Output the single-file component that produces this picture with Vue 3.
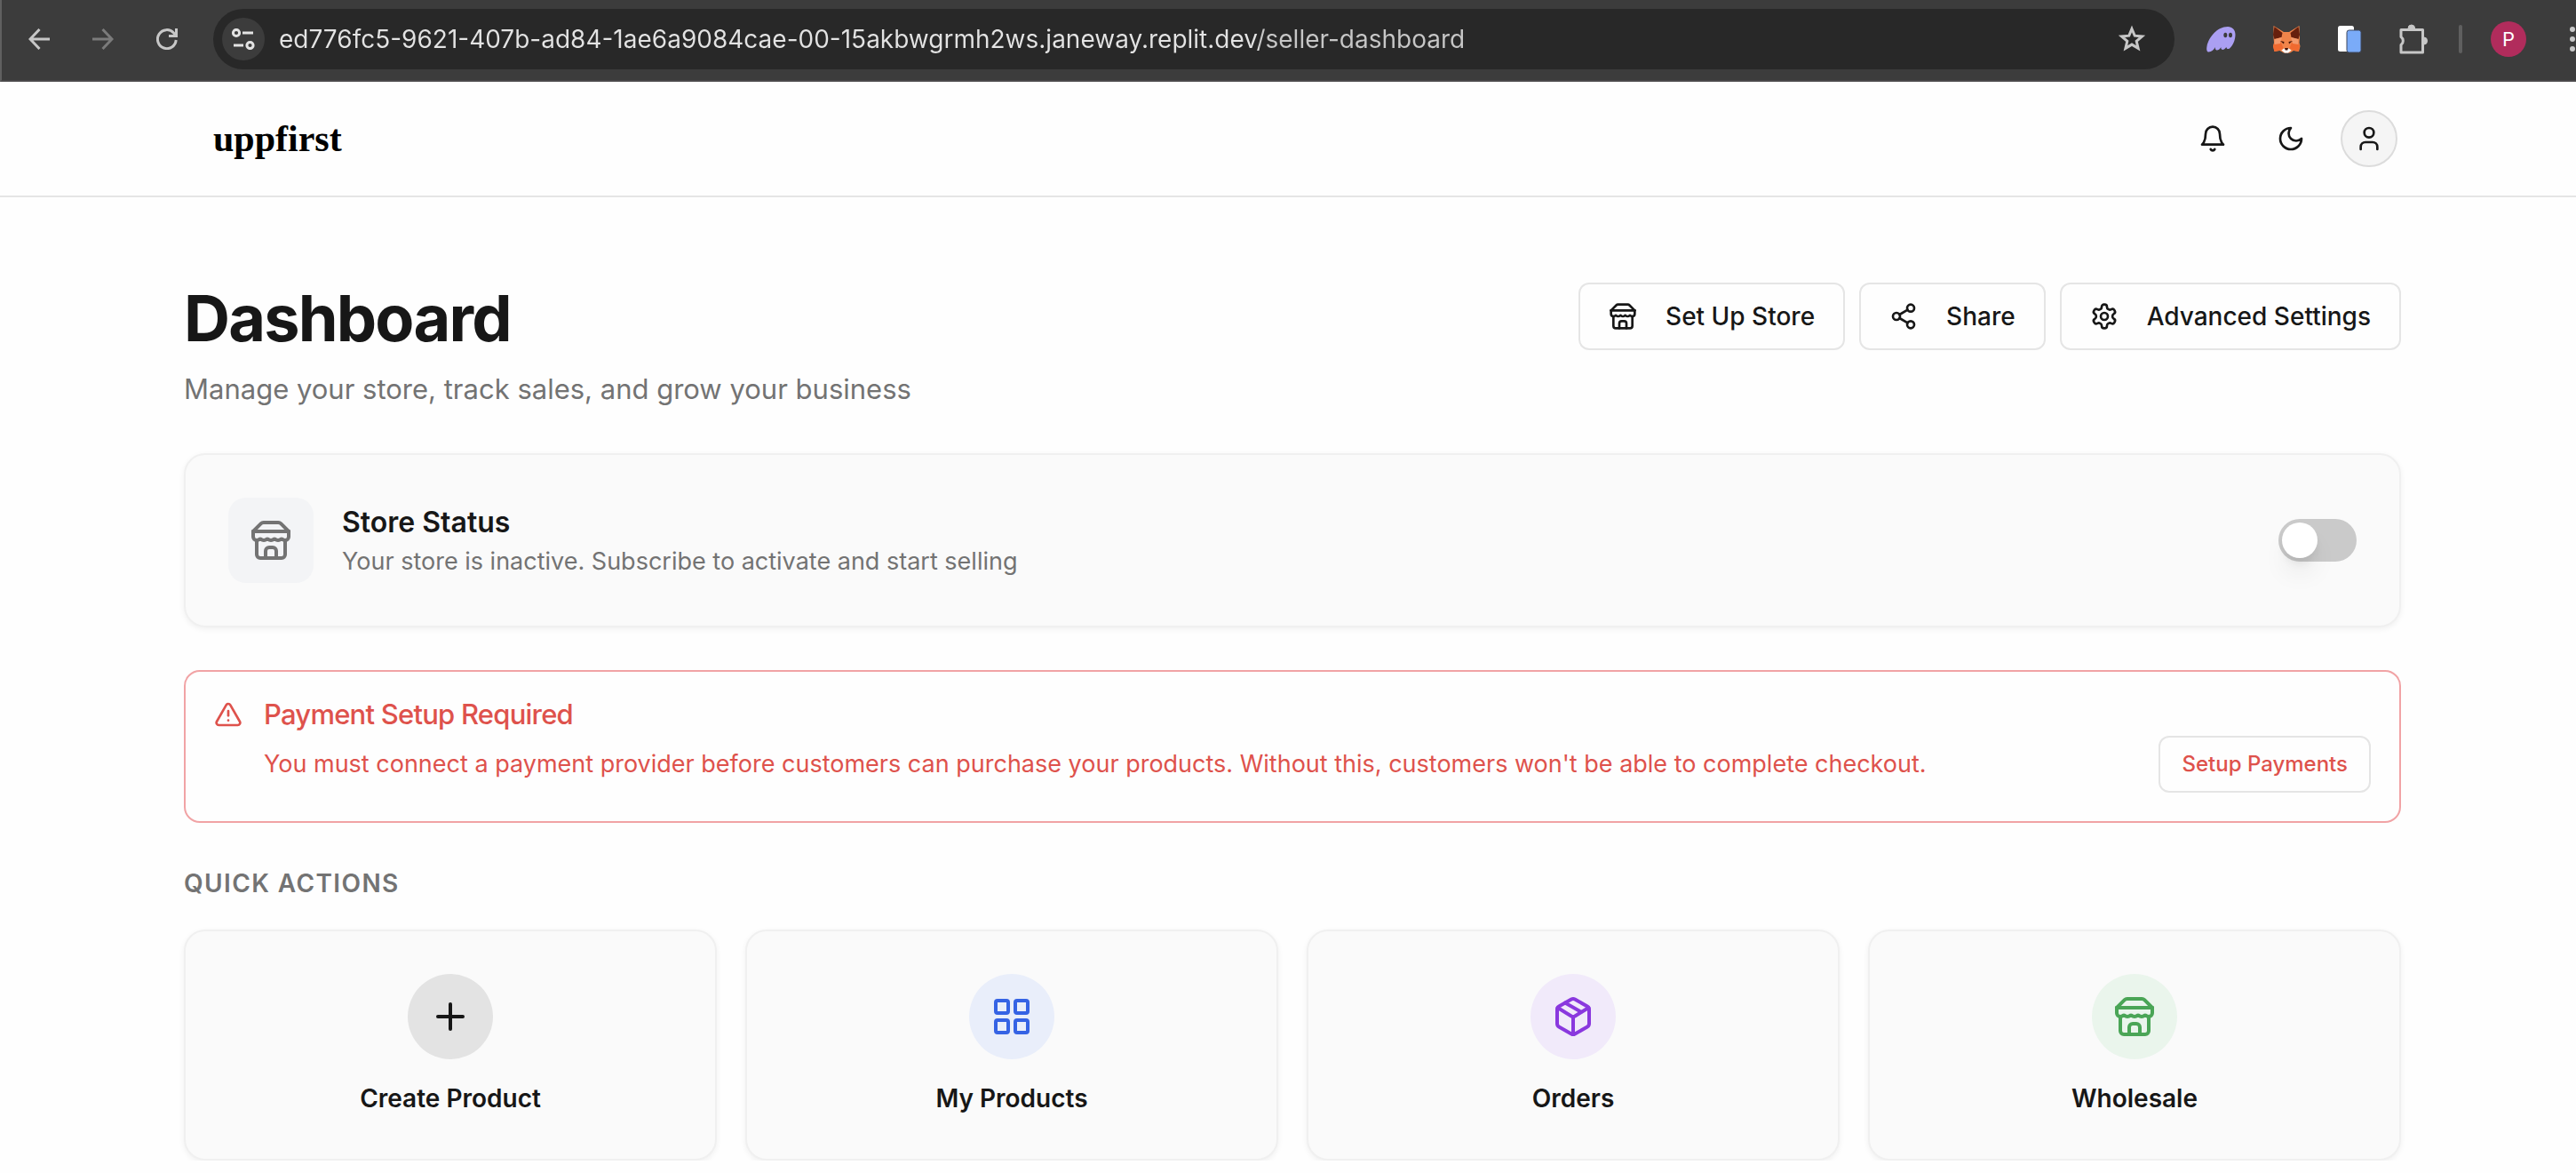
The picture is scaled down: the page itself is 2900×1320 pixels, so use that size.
<script setup>
import { h, ref } from 'vue'

const shapes = {
  bell: ['M6 8a6 6 0 0 1 12 0c0 7 3 9 3 9H3s3-2 3-9', 'M10.3 21a1.94 1.94 0 0 0 3.4 0'],
  moon: ['M12 3a6 6 0 0 0 9 9 9 9 0 1 1-9-9Z'],
  user: ['M19 21v-2a4 4 0 0 0-4-4H9a4 4 0 0 0-4 4v2', 'M8 7a4 4 0 1 0 8 0a4 4 0 1 0-8 0'],
  store: [
    'm2 7 4.41-4.41A2 2 0 0 1 7.83 2h8.34a2 2 0 0 1 1.42.59L22 7',
    'M4 12v8a2 2 0 0 0 2 2h12a2 2 0 0 0 2-2v-8',
    'M15 22v-4a2 2 0 0 0-2-2h-2a2 2 0 0 0-2 2v4',
    'M2 7h20',
    'M22 7v3a2 2 0 0 1-2 2a2.7 2.7 0 0 1-1.59-.63.7.7 0 0 0-.82 0A2.7 2.7 0 0 1 16 12a2.7 2.7 0 0 1-1.59-.63.7.7 0 0 0-.82 0A2.7 2.7 0 0 1 12 12a2.7 2.7 0 0 1-1.59-.63.7.7 0 0 0-.82 0A2.7 2.7 0 0 1 8 12a2.7 2.7 0 0 1-1.59-.63.7.7 0 0 0-.82 0A2.7 2.7 0 0 1 4 12a2 2 0 0 1-2-2V7',
  ],
  share: [
    'M15 5a3 3 0 1 0 6 0a3 3 0 1 0-6 0',
    'M3 12a3 3 0 1 0 6 0a3 3 0 1 0-6 0',
    'M15 19a3 3 0 1 0 6 0a3 3 0 1 0-6 0',
    'M8.59 13.51l6.83 3.98',
    'M15.41 6.51l-6.82 3.98',
  ],
  settings: [
    'M12.22 2h-.44a2 2 0 0 0-2 2v.18a2 2 0 0 1-1 1.73l-.43.25a2 2 0 0 1-2 0l-.15-.08a2 2 0 0 0-2.73.73l-.22.38a2 2 0 0 0 .73 2.73l.15.1a2 2 0 0 1 1 1.72v.51a2 2 0 0 1-1 1.74l-.15.09a2 2 0 0 0-.73 2.73l.22.38a2 2 0 0 0 2.73.73l.15-.08a2 2 0 0 1 2 0l.43.25a2 2 0 0 1 1 1.73V20a2 2 0 0 0 2 2h.44a2 2 0 0 0 2-2v-.18a2 2 0 0 1 1-1.73l.43-.25a2 2 0 0 1 2 0l.15.08a2 2 0 0 0 2.73-.73l.22-.39a2 2 0 0 0-.73-2.73l-.15-.08a2 2 0 0 1-1-1.74v-.5a2 2 0 0 1 1-1.74l.15-.09a2 2 0 0 0 .73-2.73l-.22-.38a2 2 0 0 0-2.73-.73l-.15.08a2 2 0 0 1-2 0l-.43-.25a2 2 0 0 1-1-1.73V4a2 2 0 0 0-2-2z',
    'M9 12a3 3 0 1 0 6 0a3 3 0 1 0-6 0',
  ],
  alert: ['m21.73 18-8-14a2 2 0 0 0-3.48 0l-8 14A2 2 0 0 0 4 21h16a2 2 0 0 0 1.73-3', 'M12 9v4', 'M12 17h.01'],
  plus: ['M5 12h14', 'M12 5v14'],
  grid: [
    'M4 3h5a1 1 0 0 1 1 1v5a1 1 0 0 1-1 1H4a1 1 0 0 1-1-1V4a1 1 0 0 1 1-1z',
    'M15 3h5a1 1 0 0 1 1 1v5a1 1 0 0 1-1 1h-5a1 1 0 0 1-1-1V4a1 1 0 0 1 1-1z',
    'M15 14h5a1 1 0 0 1 1 1v5a1 1 0 0 1-1 1h-5a1 1 0 0 1-1-1v-5a1 1 0 0 1 1-1z',
    'M4 14h5a1 1 0 0 1 1 1v5a1 1 0 0 1-1 1H4a1 1 0 0 1-1-1v-5a1 1 0 0 1 1-1z',
  ],
  box: [
    'M11 21.73a2 2 0 0 0 2 0l7-4A2 2 0 0 0 21 16V8a2 2 0 0 0-1-1.73l-7-4a2 2 0 0 0-2 0l-7 4A2 2 0 0 0 3 8v8a2 2 0 0 0 1 1.73z',
    'M12 22V12',
    'm3.3 7 7.703 4.734a2 2 0 0 0 1.994 0L20.7 7',
    'm7.5 4.27 9 5.15',
  ],
}

const Icon = (props) =>
  h(
    'svg',
    {
      viewBox: '0 0 24 24',
      width: props.size,
      height: props.size,
      fill: 'none',
      stroke: 'currentColor',
      'stroke-width': 2,
      'stroke-linecap': 'round',
      'stroke-linejoin': 'round',
      'aria-hidden': 'true',
    },
    shapes[props.name].map((d) => h('path', { d })),
  )
Icon.props = ['name', 'size']

const address = ref('ed776fc5-9621-407b-ad84-1ae6a9084cae-00-15akbwgrmh2ws.janeway.replit.dev/seller-dashboard')
const active = ref(false)

const headerActions = [
  { label: 'Set Up Store', icon: 'store' },
  { label: 'Share', icon: 'share' },
  { label: 'Advanced Settings', icon: 'settings' },
]

const quickActions = [
  { label: 'Create Product', icon: 'plus', tone: 'neutral' },
  { label: 'My Products', icon: 'grid', tone: 'blue' },
  { label: 'Orders', icon: 'box', tone: 'purple' },
  { label: 'Wholesale', icon: 'store', tone: 'green' },
]
</script>

<template>
  <div class="window">
    <div class="toolbar">
      <div class="nav">
        <button aria-label="Back">
          <svg width="24" height="24" viewBox="0 0 24 24" fill="none" stroke="#c7c7c7" stroke-width="3"><path d="M24 12H2M12.500 1L2 12l10.500 11" /></svg>
        </button>
        <button aria-label="Forward" disabled>
          <svg width="24" height="24" viewBox="0 0 24 24" fill="none" stroke="#7b7b7b" stroke-width="3"><path d="M0 12h22M11.500 1L22 12 11.500 23" /></svg>
        </button>
        <button aria-label="Reload">
          <svg width="24" height="24" viewBox="0 0 24 24" fill="none" stroke="#c7c7c7" stroke-width="3"><path d="M22.200 13A10.400 10.500 0 1 1 19.500 5l2.500 3M22.500 0v8.500H14" /></svg>
        </button>
      </div>
      <div class="omnibox">
        <button class="site-info" aria-label="View site information">
          <svg width="28" height="24" viewBox="0 0 28 24" fill="none" stroke="#e3e3e3" stroke-width="3"><circle cx="6" cy="5" r="3.600" /><path d="M13 5h12M3 19h11" /><circle cx="21.500" cy="19" r="3.600" /></svg>
        </button>
        <input v-model="address" class="address" type="text" aria-label="Address" spellcheck="false" />
        <button class="star" aria-label="Bookmark this tab">
          <svg width="32" height="32" viewBox="0 0 32 32" fill="none" stroke="#c7c7c7" stroke-width="3"><path d="M16 4.500l3.200 7.700 8.300.7-6.300 5.400 1.900 8.100-7.100-4.300-7.100 4.300 1.900-8.100-6.300-5.400 8.300-.7z" /></svg>
        </button>
      </div>
      <div class="extensions">
        <button aria-label="Phantom">
          <svg width="34" height="32" viewBox="0 0 34 32">
            <path d="M25 2c5 0 8.500 3.500 8.500 9 0 6-3 13-6.500 15.500-2 1.300-3.500.3-3.600-1.500-2 2.500-4 3.500-5.300 2.500-.8-.6-.9-1.500-.6-2.500-2 3-4 4-5.500 3.300-1-.5-1.400-1.600-1-3.300-2 3-4.500 5.500-7.500 5.500C1.500 30.500.7 28 1.500 24 3.500 14 13 2 25 2z" fill="#ab9ff2" />
            <ellipse cx="22.300" cy="11.500" rx="2" ry="2.800" fill="#3c3c3c" /><ellipse cx="28" cy="11.500" rx="2" ry="2.800" fill="#3c3c3c" />
          </svg>
        </button>
        <button aria-label="MetaMask">
          <svg width="32" height="32" viewBox="0 0 32 32">
            <path d="M1.500 1L13 8h6L30.500 1l.5 13-.5 6 1 4-1.500 6-6-1-4 2.500h-7L8.500 29l-6 1L1 24l1-4-.5-6z" fill="#f0844a" />
            <path d="M2.500 2l9 7-1 5-8 2-1.500-5zM29.500 2l-9 7 1 5 8 2 1.500-5z" fill="#661f0d" />
            <path d="M2.500 20l7-1 3 7-3 2.500-7 1.500L1 24zM29.500 20l-7-1-3 7 3 2.500 7 1.500L31 24z" fill="#f06a30" />
            <path d="M3 16l8-2-2 7-6.500 1zM29 16l-8-2 2 7 6.500 1z" fill="#f39a6c" />
            <path d="M9 18l4.500 1-.5 2.500zM23 18l-4.500 1 .5 2.500z" fill="#421509" />
            <path d="M10.500 28.500l3-2h5l3 2-3.500 3h-4z" fill="#fff" />
            <path d="M14 26h4l-.7 2.500h-2.600z" fill="#421509" />
          </svg>
        </button>
        <button aria-label="Copy pages">
          <svg width="28" height="32" viewBox="0 0 28 32">
            <rect x="1" y="1" width="18" height="29" rx="2.500" fill="#fff" />
            <rect x="11" y="6" width="16" height="25" rx="2.500" fill="#7aabf8" stroke="#3c465c" stroke-width="1" />
          </svg>
        </button>
        <button aria-label="Extensions">
          <svg width="34" height="36" viewBox="0 0 34 36" fill="none" stroke="#c7c7c7" stroke-width="3" stroke-linejoin="round">
            <path d="M3 7.500h24.500V33H3v-8.500a5.500 5.500 0 0 0 0-9z" />
            <path d="M11 6a3.800 4 0 0 1 7.600 0zM29 16a3.500 4 0 0 1 0 8z" fill="#c7c7c7" stroke-width="1" />
          </svg>
        </button>
      </div>
      <span class="divider"></span>
      <button class="profile" aria-label="Profile">P</button>
      <button class="menu" aria-label="Menu">
        <svg width="6" height="30" viewBox="0 0 6 30" fill="#c7c7c7"><circle cx="3" cy="4" r="3" /><circle cx="3" cy="15" r="3" /><circle cx="3" cy="26" r="3" /></svg>
      </button>
    </div>

    <header class="site-header">
      <a class="logo" href="#">uppfirst</a>
      <div class="site-actions">
        <button aria-label="Notifications"><Icon name="bell" :size="32" /></button>
        <button aria-label="Dark mode"><Icon name="moon" :size="32" /></button>
        <button class="account" aria-label="Account"><Icon name="user" :size="32" /></button>
      </div>
    </header>

    <main>
      <section class="intro">
        <div>
          <h1>Dashboard</h1>
          <p>Manage your store, track sales, and grow your business</p>
        </div>
        <div class="intro-actions">
          <button v-for="a in headerActions" :key="a.label" class="outline">
            <Icon :name="a.icon" :size="32" />{{ a.label }}
          </button>
        </div>
      </section>

      <section class="status card">
        <span class="tile"><Icon name="store" :size="48" /></span>
        <div class="status-text">
          <h2><label for="store-active">Store Status</label></h2>
          <p>Your store is inactive. Subscribe to activate and start selling</p>
        </div>
        <input id="store-active" v-model="active" class="switch" type="checkbox" role="switch" />
      </section>

      <section class="alert" role="alert">
        <Icon name="alert" :size="32" />
        <div class="alert-body">
          <h2>Payment Setup Required</h2>
          <div class="alert-row">
            <p>You must connect a payment provider before customers can purchase your products. Without this, customers won't be able to complete checkout.</p>
            <button class="setup">Setup Payments</button>
          </div>
        </div>
      </section>

      <h2 class="label">QUICK ACTIONS</h2>
      <section class="quick">
        <a v-for="q in quickActions" :key="q.label" class="card action" href="#">
          <span class="circle" :class="q.tone"><Icon :name="q.icon" :size="48" /></span>
          {{ q.label }}
        </a>
      </section>
    </main>
  </div>
</template>

<style>
body {
  background: #fefefe;
  overflow-x: hidden;
}
</style>

<style scoped>
.window {
  font-family: Inter, 'Liberation Sans', sans-serif;
  font-size: 28px;
  line-height: 40px;
  color: #171717;
}
.window * {
  box-sizing: border-box;
}
svg {
  display: block;
  flex: none;
}
h1,
h2,
p {
  margin: 0;
}
button {
  display: flex;
  align-items: center;
  justify-content: center;
  flex: none;
  margin: 0;
  padding: 0;
  border: 0;
  background: none;
  color: inherit;
  font: inherit;
}
a {
  color: inherit;
  text-decoration: none;
}

/* Browser toolbar */
.toolbar {
  display: flex;
  align-items: center;
  height: 92px;
  padding: 0 1px 2px 30px;
  background: #3c3c3c;
  border-left: 2px solid #606060;
  border-bottom: 2px solid #4a484a;
}
.nav {
  display: flex;
  gap: 48px;
  margin-right: 40px;
}
.omnibox {
  display: flex;
  align-items: center;
  flex: 1;
  min-width: 0;
  height: 68px;
  padding: 0 32px 0 10px;
  border-radius: 34px;
  background: #282828;
}
.site-info {
  width: 48px;
  height: 48px;
  border-radius: 50%;
  background: #3c3c3c;
}
.address {
  flex: 1;
  min-width: 0;
  height: 48px;
  margin: 0 16px;
  padding: 0;
  border: 0;
  outline: 0;
  background: linear-gradient(90deg, #e3e3e3 1103px, #c7c7c7 1103px);
  background-clip: text;
  -webkit-background-clip: text;
  -webkit-text-fill-color: transparent;
  font: inherit;
}
.extensions {
  display: flex;
  align-items: center;
  gap: 41px;
  margin-left: 35px;
}
.divider {
  width: 4px;
  height: 32px;
  margin: 0 32px 0 34px;
  border-radius: 2px;
  background: #5f5f5f;
}
.profile {
  width: 40px;
  height: 40px;
  border-radius: 50%;
  background: #b12c5c;
  color: #fff;
  font-size: 22px;
}
.menu {
  margin-left: 49px;
}

/* Site header */
.site-header {
  display: flex;
  align-items: center;
  justify-content: space-between;
  height: 130px;
  padding: 0 201px 0 240px;
  border-bottom: 2px solid #e5e5e5;
}
.logo {
  color: #000;
  font-family: 'Liberation Serif', serif;
  font-size: 42px;
  font-weight: 700;
}
.site-actions {
  display: flex;
  align-items: center;
  gap: 24px;
}
.site-actions button {
  width: 64px;
  height: 64px;
  border-radius: 50%;
}
.site-actions .account {
  background: #f5f5f5;
  border: 2px solid #dcdcdc;
}

/* Dashboard */
main {
  padding: 96px 197px 0 207px;
}
.intro {
  display: flex;
  align-items: flex-start;
  justify-content: space-between;
}
h1 {
  font-size: 72px;
  line-height: 80px;
  font-weight: 700;
  letter-spacing: -0.025em;
}
.intro p {
  margin-top: 16px;
  font-size: 31px;
  line-height: 48px;
  color: #737373;
}
.intro-actions {
  display: flex;
  gap: 16px;
}
.outline {
  gap: 32px;
  height: 76px;
  padding: 0 32px;
  border: 2px solid #e5e5e5;
  border-radius: 12px;
  font-weight: 500;
}
.card {
  background: #fafafa;
  border: 2px solid #f0f0f0;
  border-radius: 24px;
  box-shadow: 0 2px 6px rgba(0, 0, 0, 0.06);
}
.status {
  display: flex;
  align-items: center;
  gap: 32px;
  margin-top: 48px;
  padding: 48px;
}
.tile {
  display: grid;
  place-items: center;
  width: 96px;
  height: 96px;
  border-radius: 20px;
  background: #f3f4f6;
  color: #737373;
}
.status-text {
  flex: 1;
}
.status h2 {
  font-size: 32px;
  line-height: 48px;
  font-weight: 600;
}
.status p {
  font-size: 27px;
  color: #737373;
}
.switch {
  appearance: none;
  width: 88px;
  height: 48px;
  margin: 0;
  padding: 4px;
  border-radius: 24px;
  background: #cacaca;
}
.switch::before {
  content: '';
  display: block;
  width: 40px;
  height: 40px;
  border-radius: 50%;
  background: #fff;
  box-shadow: 0 20px 30px -6px rgba(0, 0, 0, 0.1), 0 8px 12px -4px rgba(0, 0, 0, 0.1);
}
.switch:checked {
  background: #171717;
}
.switch:checked::before {
  margin-left: auto;
}
.alert {
  display: flex;
  gap: 24px;
  margin-top: 48px;
  padding: 32px;
  border: 2px solid #f1a3a5;
  border-radius: 18px;
  color: #de524c;
}
.alert-body {
  flex: 1;
}
.alert h2 {
  font-size: 31px;
  line-height: 32px;
  font-weight: 500;
  letter-spacing: -0.025em;
}
.alert p {
  font-size: 27px;
}
.alert-row {
  display: flex;
  align-items: center;
  justify-content: space-between;
  gap: 32px;
  margin-top: 8px;
}
.setup {
  height: 64px;
  padding: 0 24px;
  border: 2px solid #e5e5e5;
  border-radius: 12px;
  font-size: 24px;
  font-weight: 500;
}
.label {
  margin: 48px 0 32px;
  font-size: 28px;
  line-height: 40px;
  font-weight: 600;
  letter-spacing: 0.05em;
  color: #737373;
}
.quick {
  display: grid;
  grid-template-columns: repeat(4, 1fr);
  gap: 32px;
}
.action {
  display: flex;
  flex-direction: column;
  align-items: center;
  gap: 24px;
  padding: 48px;
  font-weight: 600;
}
.circle {
  display: grid;
  place-items: center;
  width: 96px;
  height: 96px;
  border-radius: 50%;
}
.neutral {
  background: #e3e3e3;
}
.blue {
  background: #e9eefa;
  color: #3563e4;
}
.purple {
  background: #f1eafa;
  color: #8a38de;
}
.green {
  background: #eaf5ec;
  color: #4aa556;
}
</style>
